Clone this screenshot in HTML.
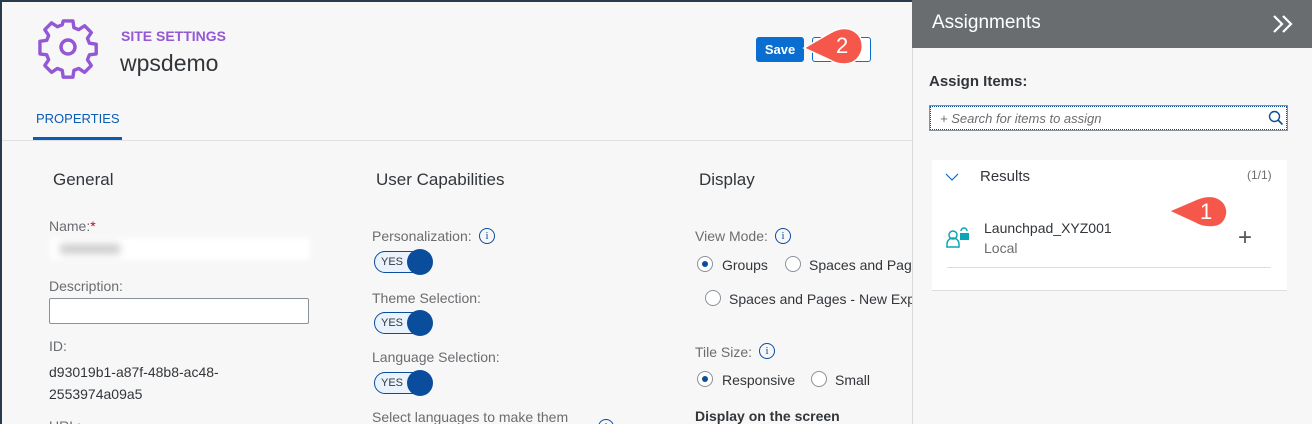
<!DOCTYPE html>
<html><head><style>
*{box-sizing:border-box;margin:0;padding:0}
html,body{width:1312px;height:424px;overflow:hidden}
body{background:#f7f7f7;font-family:"Liberation Sans",sans-serif;color:#32363a;position:relative}
.a{position:absolute}
.lbl{font-size:14px;color:#6a6d70}
.sw{position:absolute;width:58px;height:22px;border:1px solid #0a4d9c;border-radius:11px;background:#eaf3fd;font-size:11px;color:#32363a}
.sw span{position:absolute;left:6px;top:4px}
.sw i{position:absolute;right:-2px;top:-3px;width:26px;height:26px;border-radius:50%;background:#0a4d9c}
.info{position:absolute;width:16px;height:16px;border:1.3px solid #0a4d9c;border-radius:50%;font-size:11px;color:#0a4d9c;text-align:center;line-height:14px;font-family:"Liberation Serif",serif}
.rad{position:absolute;width:16px;height:16px;border:1px solid #89919a;border-radius:50%;background:#fff}
.rad.on::after{content:"";position:absolute;left:4px;top:4px;width:6px;height:6px;border-radius:50%;background:#0a4d9c}
.rt{font-size:14px;color:#32363a}
</style></head><body>
<div class="a" style="left:0;top:0;width:912px;height:2px;background:#2a3a4d"></div>
<div class="a" style="left:0;top:0;width:2px;height:424px;background:#2a3a4d"></div>
<svg class="a" style="left:38px;top:19px" width="62" height="60" viewBox="0 0 62 58"><g fill="none" stroke="#9457d5" stroke-width="3.5" stroke-linejoin="round">
<path d="M26 3h10l1 7 5 2 6-4 7 7-4 6 2 5 7 1v10l-7 1-2 5 4 6-7 7-6-4-5 2-1 7H26l-1-7-5-2-6 4-7-7 4-6-2-5-7-1V24l7-1 2-5-4-6 7-7 6 4 5-2z" transform="translate(0,-2) scale(0.97)"/>
<circle cx="30" cy="27" r="7"/></g></svg>
<div class="a" style="left:121px;top:28px;font-size:14px;font-weight:bold;color:#9457d5">SITE SETTINGS</div>
<div class="a" style="left:120px;top:50px;font-size:23px;color:#32363a">wpsdemo</div>
<div class="a" style="left:36px;top:111px;font-size:13px;color:#0a5cb5">PROPERTIES</div>
<div class="a" style="left:33px;top:137px;width:89px;height:3px;background:#0a5cb5"></div>
<div class="a" style="left:2px;top:140px;width:910px;height:1px;background:#e0e0e0"></div>
<div class="a" style="left:756px;top:37px;width:48px;height:25px;background:#0a6ed1;border-radius:3px;color:#fff;font-weight:bold;font-size:13px;text-align:center;line-height:25px">Save</div>
<div class="a" style="left:812px;top:37px;width:59px;height:25px;border:1px solid #0a6ed1;border-radius:3px;background:#fff"></div>
<svg class="a" style="left:800px;top:24px" width="70" height="46"><path d="M4 24 L30 9 Q42 2 52 6 Q64 12 62 26 Q58 40 44 40 Q36 40 30 36 Z" fill="#f5574b" stroke="#fff" stroke-width="1.5"/></svg>
<div class="a" style="left:836px;top:33px;color:#fff;font-size:22px">2</div>

<div class="a" style="left:53px;top:170px;font-size:17px">General</div>
<div class="a lbl" style="left:49px;top:218px">Name:<span style="color:#d0021b">*</span></div>
<div class="a" style="left:50px;top:238px;width:260px;height:22px;background:#fff;filter:blur(3px)"></div>
<div class="a" style="left:60px;top:244px;width:60px;height:10px;background:#ccc;filter:blur(4px)"></div>
<div class="a lbl" style="left:49px;top:278px">Description:</div>
<div class="a" style="left:49px;top:298px;width:260px;height:26px;border:1px solid #89919a;border-radius:2px;background:#fff"></div>
<div class="a lbl" style="left:49px;top:338px">ID:</div>
<div class="a rt" style="left:49px;top:364px">d93019b1-a87f-48b8-ac48-</div>
<div class="a rt" style="left:49px;top:386px">2553974a09a5</div>
<div class="a lbl" style="left:49px;top:418px">URL:</div>

<div class="a" style="left:376px;top:170px;font-size:17px">User Capabilities</div>
<div class="a lbl" style="left:372px;top:228px">Personalization:</div><div class="info" style="left:479px;top:228px">i</div>
<div class="sw" style="left:374px;top:251px"><span>YES</span><i></i></div>
<div class="a lbl" style="left:372px;top:290px">Theme Selection:</div>
<div class="sw" style="left:374px;top:312px"><span>YES</span><i></i></div>
<div class="a lbl" style="left:372px;top:349px">Language Selection:</div>
<div class="sw" style="left:374px;top:372px"><span>YES</span><i></i></div>
<div class="a lbl" style="left:372px;top:409px">Select languages to make them</div>
<div class="info" style="left:598px;top:419px">i</div>

<div class="a" style="left:699px;top:170px;font-size:17px">Display</div>
<div class="a lbl" style="left:695px;top:228px">View Mode:</div><div class="info" style="left:775px;top:228px">i</div>
<div class="rad on" style="left:697px;top:256px"></div><div class="a rt" style="left:722px;top:257px">Groups</div>
<div class="rad" style="left:785px;top:256px"></div><div class="a rt" style="left:809px;top:257px">Spaces and Pages</div>
<div class="rad" style="left:705px;top:290px"></div><div class="a rt" style="left:729px;top:291px;white-space:nowrap">Spaces and Pages - New Experience</div>
<div class="a lbl" style="left:695px;top:344px">Tile Size:</div><div class="info" style="left:759px;top:343px">i</div>
<div class="rad on" style="left:697px;top:371px"></div><div class="a rt" style="left:722px;top:372px">Responsive</div>
<div class="rad" style="left:811px;top:371px"></div><div class="a rt" style="left:835px;top:372px">Small</div>
<div class="a" style="left:695px;top:408px;font-size:14px;font-weight:bold">Display on the screen</div>

<div class="a" style="left:912px;top:0;width:400px;height:424px;background:#f7f7f7;border-left:1px solid #d9d9d9"></div>
<div class="a" style="left:912px;top:0;width:400px;height:48px;background:#6a6d70"></div>
<div class="a" style="left:932px;top:12px;color:#fff;font-size:19px">Assignments</div>
<svg class="a" style="left:1272px;top:14px" width="22" height="20"><path d="M2 2l8 8-8 8M11 2l8 8-8 8" fill="none" stroke="#fff" stroke-width="2.2"/></svg>
<div class="a" style="left:929px;top:73px;font-size:15px;font-weight:bold">Assign Items:</div>
<div class="a" style="left:930px;top:106px;width:357px;height:24px;border:1px dotted #0a4d9c;outline:1px solid #89919a;background:#fff"></div>
<div class="a" style="left:940px;top:111px;font-size:13px;font-style:italic;color:#6a6d70">+ Search for items to assign</div>
<svg class="a" style="left:1268px;top:110px" width="16" height="16"><circle cx="6.5" cy="6.5" r="5" fill="none" stroke="#0a4d9c" stroke-width="1.4"/><path d="M10 10l4.5 4.5" stroke="#0a4d9c" stroke-width="1.6"/></svg>
<div class="a" style="left:932px;top:160px;width:355px;height:131px;background:#fff;border-bottom:1px solid #ddd"></div>
<svg class="a" style="left:945px;top:172px" width="14" height="10"><path d="M1 2l6 6 6-6" fill="none" stroke="#0a6ed1" stroke-width="1.2"/></svg>
<div class="a" style="left:980px;top:168px;font-size:15px">Results</div>
<div class="a" style="left:1247px;top:168px;font-size:12px;color:#6a6d70">(1/1)</div>
<svg class="a" style="left:946px;top:226px" width="24" height="22"><g fill="none" stroke="#0aa5b6" stroke-width="1.5"><circle cx="7" cy="9" r="4"/><path d="M1 21v-3a6 6 0 0 1 12 0v3z"/><path d="M15 5a3 3 0 0 1 6 0"/></g><rect x="14" y="7" width="9" height="7" fill="#0aa5b6"/></svg>
<div class="a" style="left:984px;top:220px;font-size:14px">Launchpad_XYZ001</div>
<div class="a" style="left:984px;top:240px;font-size:14px;color:#6a6d70">Local</div>
<div class="a" style="left:1238px;top:224px;font-size:24px;color:#555;font-weight:300">+</div>
<div class="a" style="left:947px;top:267px;width:324px;height:1px;background:#ddd"></div>
<svg class="a" style="left:1165px;top:193px" width="70" height="42"><path d="M4 18 L32 6 Q42 2 50 4 Q62 8 62 20 Q60 34 46 34 Q36 34 30 30 Z" fill="#f5574b" stroke="#fff" stroke-width="1.5"/></svg>
<div class="a" style="left:1200px;top:199px;color:#fff;font-size:22px">1</div>
</body></html>
